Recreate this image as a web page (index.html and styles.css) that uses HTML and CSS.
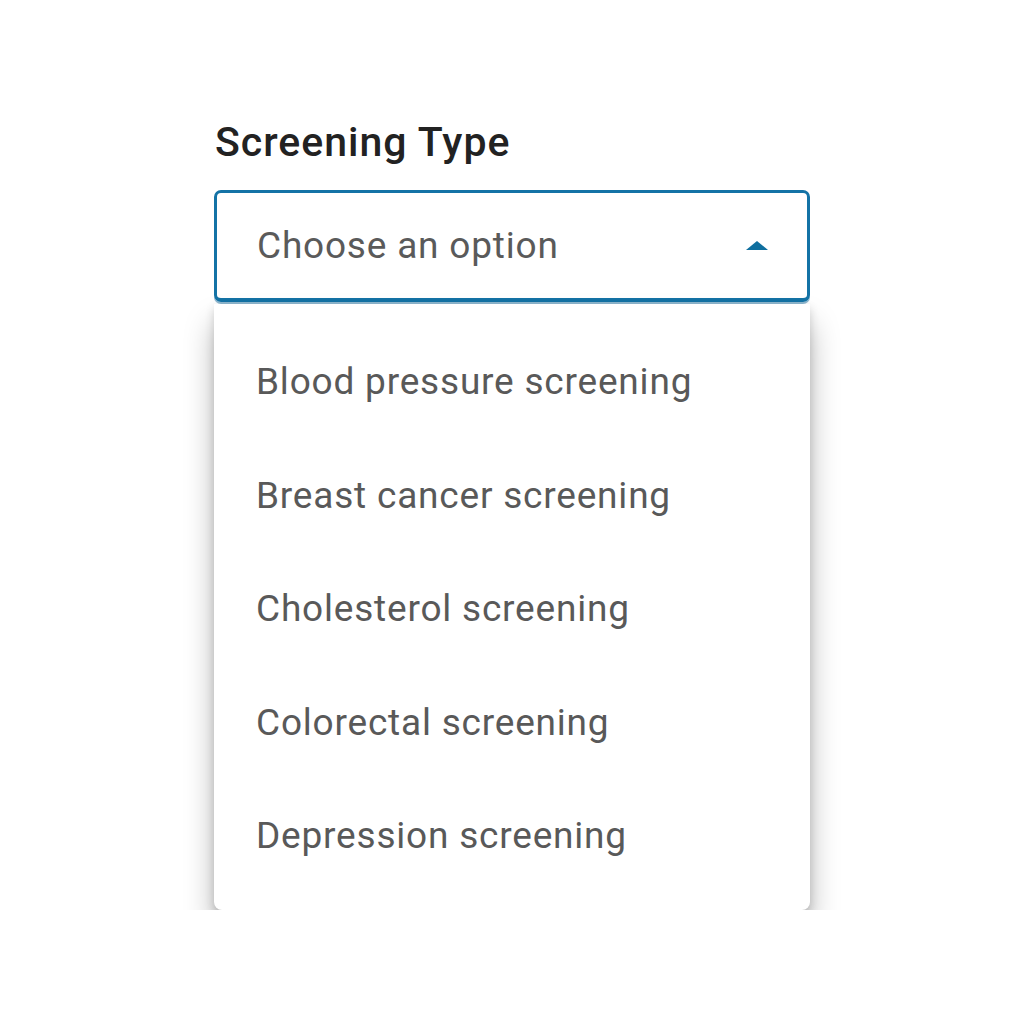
FILE: index.html
```html
<!DOCTYPE html>
<html>
<head>
<meta charset="utf-8">
<link rel="stylesheet" href="styles.css">
</head>
<body>
<div class="field">
  <div class="label">Screening Type</div>
  <div class="select">
    <span class="placeholder">Choose an option</span>
    <svg class="caret" width="24" height="11" viewBox="0 0 24 11"><polygon points="12,1 23,10 1,10" fill="#0f6f9f"/></svg>
  </div>
  <ul class="menu">
    <li>Blood pressure screening</li>
    <li>Breast cancer screening</li>
    <li>Cholesterol screening</li>
    <li>Colorectal screening</li>
    <li>Depression screening</li>
  </ul>
</div>
</body>
</html>
```
FILE: styles.css
```css
html, body {
  margin: 0;
  padding: 0;
  background: #ffffff;
}
body {
  font-family: Roboto, "Liberation Sans", sans-serif;
  padding: 118px 0 0 214px;
}
.field {
  width: 596px;
}
.label {
  font-size: 41px;
  font-weight: 500;
  color: #222222;
  line-height: 48px;
  margin-bottom: 24px;
  padding-left: 1px;
  letter-spacing: 1px;
}
.select {
  box-sizing: border-box;
  height: 112px;
  border: 3px solid #1473a6;
  border-bottom: 4px solid #1473a6;
  border-radius: 7px;
  display: flex;
  align-items: center;
  justify-content: space-between;
  padding: 0 38px 0 40px;
  box-shadow: 0 2px 0 #8fb8d0;
}
.placeholder {
  font-size: 37px;
  color: #5a5a5a;
  letter-spacing: 0.8px;
}
.caret {
  display: block;
}
.menu {
  list-style: none;
  margin: 2px 0 0;
  padding: 21px 0 17px;
  background: #fff;
  border-radius: 0 0 8px 8px;
  box-shadow: 0 20px 30px rgba(0,0,0,0.28), 0 4px 10px rgba(0,0,0,0.16);
}
.menu li {
  font-size: 37px;
  color: #595959;
  height: 113.5px;
  line-height: 113.5px;
  padding-left: 42px;
  letter-spacing: 0.8px;
}
```
